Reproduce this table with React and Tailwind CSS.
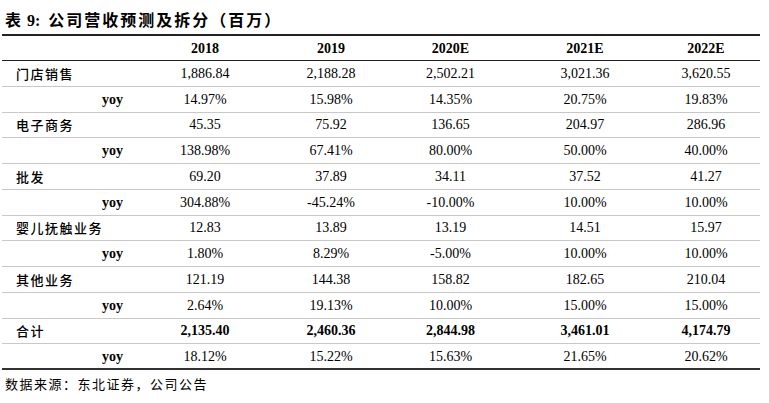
import React from 'react';

const cols = ['2018', '2019', '2020E', '2021E', '2022E'];
const widths = ['w-[148px]', 'w-[104px]', 'w-[135px]', 'w-[134px]', 'w-[108px]'];

const rows = [
  { label: '门店销售', values: ['1,886.84', '2,188.28', '2,502.21', '3,021.36', '3,620.55'] },
  { yoy: true, values: ['14.97%', '15.98%', '14.35%', '20.75%', '19.83%'] },
  { label: '电子商务', values: ['45.35', '75.92', '136.65', '204.97', '286.96'] },
  { yoy: true, values: ['138.98%', '67.41%', '80.00%', '50.00%', '40.00%'] },
  { label: '批发', values: ['69.20', '37.89', '34.11', '37.52', '41.27'] },
  { yoy: true, values: ['304.88%', '-45.24%', '-10.00%', '10.00%', '10.00%'] },
  { label: '婴儿抚触业务', values: ['12.83', '13.89', '13.19', '14.51', '15.97'] },
  { yoy: true, values: ['1.80%', '8.29%', '-5.00%', '10.00%', '10.00%'] },
  { label: '其他业务', values: ['121.19', '144.38', '158.82', '182.65', '210.04'] },
  { yoy: true, values: ['2.64%', '19.13%', '10.00%', '15.00%', '15.00%'] },
  { label: '合计', bold: true, values: ['2,135.40', '2,460.36', '2,844.98', '3,461.01', '4,174.79'] },
  { yoy: true, values: ['18.12%', '15.22%', '15.63%', '21.65%', '20.62%'] },
];

const cjk = "font-['Noto_Sans_CJK_SC',sans-serif]";
const serif = "font-['Liberation_Serif','Noto_Sans_CJK_SC',serif]";

export default function App() {
  return (
    <div className="w-[769px] h-[403px] bg-white text-black overflow-hidden">
      <div className={`pt-[8px] pl-[5px] h-[34px] text-[16px] leading-[22px] font-bold ${serif}`}>
        <span>表</span>
        <span className="ml-[6px]">9:</span>
        <span className={`ml-[8px] tracking-[2px] ${cjk}`}>公司营收预测及拆分（百万）</span>
      </div>
      <div className="ml-[2px] w-[758px]">
        <div className="flex h-[27px] items-center border-t-2 border-b border-[#222] text-[14px] font-bold">
          <div className="w-[129px]" />
          {cols.map((c, i) => (
            <div key={c} className={`${widths[i]} text-center ${serif}`}>{c}</div>
          ))}
        </div>
        {rows.map((r, ri) => (
          <div
            key={ri}
            className={`flex h-[25.75px] items-center text-[14px] ${
              ri === rows.length - 1 ? 'border-b-2 border-[#333]' : 'border-b border-[#c8c8c8]'
            }`}
          >
            {r.yoy ? (
              <div className={`w-[129px] pr-[8px] text-right font-bold ${serif}`}>yoy</div>
            ) : (
              <div className={`w-[129px] pl-[14px] text-[13px] font-medium tracking-[1.5px] ${cjk}`}>{r.label}</div>
            )}
            {r.values.map((v, i) => (
              <div key={i} className={`${widths[i]} text-center ${serif} ${r.bold ? 'font-bold' : ''}`}>
                {v}
              </div>
            ))}
          </div>
        ))}
      </div>
      <div className={`pl-[5px] pt-[4px] text-[13px] tracking-[1.5px] ${cjk}`}>数据来源：东北证券，公司公告</div>
    </div>
  );
}
